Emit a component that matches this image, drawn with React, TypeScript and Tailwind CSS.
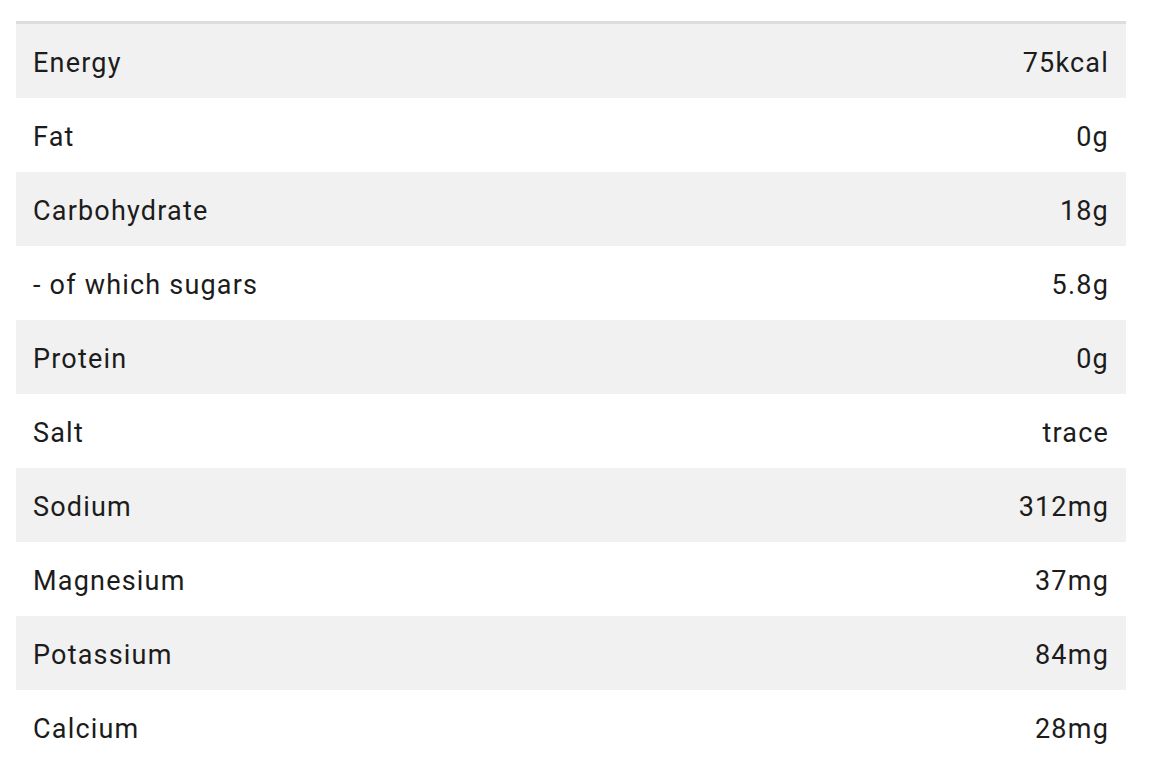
const rows: [string, string][] = [
  ['Energy', '75kcal'],
  ['Fat', '0g'],
  ['Carbohydrate', '18g'],
  ['- of which sugars', '5.8g'],
  ['Protein', '0g'],
  ['Salt', 'trace'],
  ['Sodium', '312mg'],
  ['Magnesium', '37mg'],
  ['Potassium', '84mg'],
  ['Calcium', '28mg'],
];

export default function App() {
  return (
    <div className="min-h-screen bg-white px-4 pt-[21px] font-['Roboto',sans-serif] text-[27px] tracking-[1.2px] text-[#1c1c1c]">
      <div className="w-[1110px] border-t-[3px] border-[#dddddd]">
        {rows.map(([label, value], i) => (
          <div
            key={label}
            className={`flex h-[74px] items-center justify-between px-[17px] pt-1 ${i % 2 === 0 ? 'bg-[#f1f1f1]' : 'bg-white'}`}
          >
            <span>{label}</span>
            <span>{value}</span>
          </div>
        ))}
      </div>
    </div>
  );
}
